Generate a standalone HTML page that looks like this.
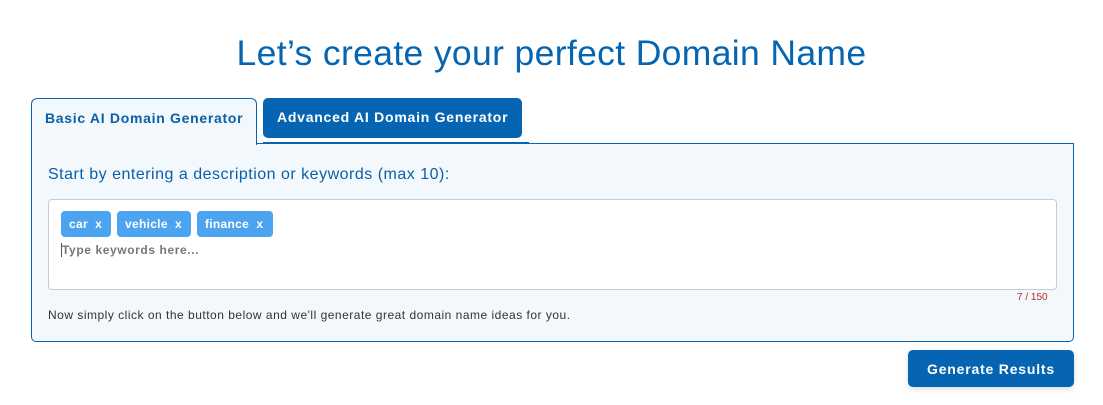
<!DOCTYPE html>
<html><head><meta charset="utf-8"><style>
*{box-sizing:border-box;margin:0;padding:0}
body{width:1103px;height:405px;background:#fff;font-family:"Liberation Sans",sans-serif;position:relative;overflow:hidden}
.abs{position:absolute}
h1{position:absolute;left:0;width:1103px;top:33px;text-align:center;font-weight:normal;font-size:35.5px;color:#0565b2;letter-spacing:0.35px}
.tab1{left:31px;top:98px;width:226px;height:47px;background:#f3f8fc;border:1px solid #0565b2;border-bottom:none;border-radius:6px 6px 0 0;z-index:2;color:#0b5fa8;font-weight:bold;font-size:14px;padding:11px 0 0 13px;letter-spacing:0.7px}
.tab2{left:263px;top:98px;width:259px;height:40px;background:#0565b2;border-radius:5px;color:#fff;font-weight:bold;font-size:14px;padding:11px 0 0 14px;letter-spacing:0.75px}
.line{left:256px;top:143px;width:817px;height:1px;background:#0565b2}
.line2{left:263px;top:142px;width:266px;height:2px;background:#0565b2}
.panel{left:31px;top:143px;width:1043px;height:199px;background:#f3f8fc;border:1px solid #0565b2;border-top:none;border-radius:0 0 5px 5px}
.lbl{left:48px;top:166px;font-size:16px;color:#0b5fa8;letter-spacing:0.5px}
.box{left:48px;top:199px;width:1009px;height:91px;background:#fff;border:1px solid #c9cdd1;border-radius:4px}
.chip{top:211px;height:26px;background:#4ca3ef;border-radius:4px;color:#fff;font-weight:bold;font-size:12px;padding:6px 0 0 8px;white-space:pre;letter-spacing:0.3px}
.ph{left:61px;top:243px;font-size:12px;color:#777;font-weight:bold;border-left:1px solid #555;letter-spacing:0.6px}
.cnt{left:1017px;top:292px;font-size:10px;color:#c0262d}
.help{left:48px;top:308px;font-size:12px;color:#333;letter-spacing:0.5px}
.btn{left:908px;top:350px;width:166px;height:37px;background:#0565b2;border-radius:5px;color:#fff;font-weight:bold;font-size:14px;text-align:center;padding-top:11px;letter-spacing:0.8px;box-shadow:0 2px 6px rgba(0,0,0,.15)}
</style></head><body>
<h1>Let’s create your perfect Domain Name</h1>
<div class="abs panel"></div>
<div class="abs line"></div>
<div class="abs tab2">Advanced AI Domain Generator</div>
<div class="abs line2"></div>
<div class="abs tab1">Basic AI Domain Generator</div>
<div class="abs lbl">Start by entering a description or keywords (max 10):</div>
<div class="abs box"></div>
<div class="abs chip" style="left:61px;width:50px">car  x</div>
<div class="abs chip" style="left:117px;width:74px">vehicle  x</div>
<div class="abs chip" style="left:197px;width:76px">finance  x</div>
<div class="abs ph">Type keywords here...</div>
<div class="abs cnt">7 / 150</div>
<div class="abs help">Now simply click on the button below and we'll generate great domain name ideas for you.</div>
<div class="abs btn">Generate Results</div>
</body></html>
